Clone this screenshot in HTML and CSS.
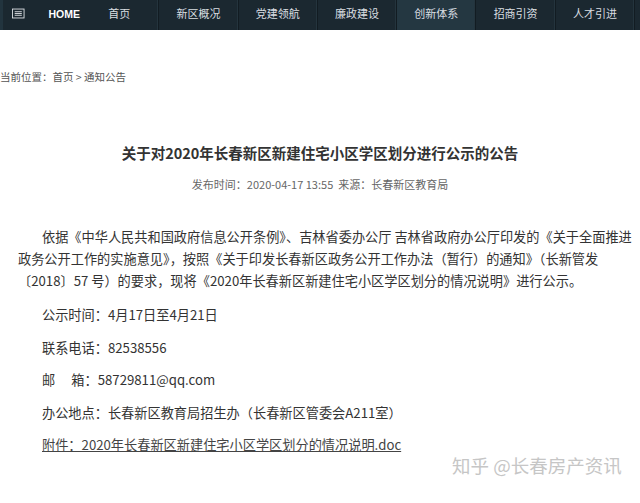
FILE: index.html
```html
<!DOCTYPE html>
<html lang="zh-CN">
<head>
    <meta charset="UTF-8">
    <meta name="viewport" content="width=device-width, initial-scale=1.0">
    <title>关于对2020年长春新区新建住宅小区学区划分进行公示的公告</title>
    <link rel="stylesheet" href="styles.css">
</head>
<body>
    <header class="topbar">
        <div class="brand">
            <svg class="menu-icon" width="14" height="11" viewBox="0 0 14 11">
                <rect x="0.5" y="0.5" width="13" height="10" fill="none" stroke="#dfe3e6" stroke-width="1"/>
                <line x1="3" y1="3.5" x2="11" y2="3.5" stroke="#dfe3e6" stroke-width="1"/>
                <line x1="3" y1="5.5" x2="11" y2="5.5" stroke="#dfe3e6" stroke-width="1"/>
                <line x1="3" y1="7.5" x2="11" y2="7.5" stroke="#dfe3e6" stroke-width="1"/>
            </svg>
            <span class="home">HOME</span>
        </div>
        <nav class="menu">
            <a>首页</a>
            <a>新区概况</a>
            <a>党建领航</a>
            <a>廉政建设</a>
            <a class="active">创新体系</a>
            <a>招商引资</a>
            <a>人才引进</a>
        </nav>
    </header>

    <div class="crumbs">当前位置：首页 &gt; 通知公告</div>

    <h1 class="title">关于对2020年长春新区新建住宅小区学区划分进行公示的公告</h1>
    <div class="meta">发布时间：2020-04-17 13:55&nbsp;&nbsp;来源：长春新区教育局</div>

    <div class="article">
        <p class="lead">依据《中华人民共和国政府信息公开条例》、吉林省委办公厅 吉林省政府办公厅印发的《关于全面推进政务公开工作的实施意见》，按照《关于印发长春新区政务公开工作办法（暂行）的通知》（长新管发〔2018〕57 号）的要求，现将《2020年长春新区新建住宅小区学区划分的情况说明》进行公示。</p>
        <p>公示时间：4月17日至4月21日</p>
        <p>联系电话：82538556</p>
        <p>邮&emsp;&nbsp;箱：58729811@qq.com</p>
        <p>办公地点：长春新区教育局招生办（长春新区管委会A211室）</p>
        <p><a class="file">附件：2020年长春新区新建住宅小区学区划分的情况说明.doc</a></p>
    </div>

    <div class="watermark">知乎 @长春房产资讯</div>
</body>
</html>
```

FILE: styles.css
```css
body, html {
    margin: 0;
    padding: 0;
    background-color: #fff;
    font-family: "Noto Sans CJK SC", "Noto Sans", sans-serif;
    color: #333;
}

body {
    position: relative;
    height: 503px;
    overflow: hidden;
}

.topbar {
    display: flex;
    height: 30px;
    background-color: #1b2830;
    border-left: 3px solid #22343e;
}

.brand {
    display: flex;
    align-items: center;
    width: 77px;
    height: 27px;
}

.menu-icon {
    margin-left: 9px;
}

.home {
    margin-left: 24px;
    font-family: "Liberation Sans", sans-serif;
    font-weight: bold;
    font-size: 10.5px;
    color: #fff;
}

.menu {
    display: flex;
}

.menu a {
    width: 78.3px;
    border-right: 1px solid #121c22;
    box-shadow: inset -1px 0 0 #24343d;
    text-align: center;
    font-size: 11px;
    line-height: 27px;
    color: #d9dee1;
}

.menu a.active {
    background-color: #243741;
}

.crumbs {
    margin-top: 39px;
    font-size: 10.5px;
    line-height: 16px;
    color: #555;
}

.title {
    margin: 58px 0 0;
    text-align: center;
    font-size: 14.5px;
    line-height: 20px;
    font-weight: bold;
    color: #333;
}

.meta {
    margin-top: 13px;
    text-align: center;
    font-size: 11px;
    line-height: 16px;
    color: #666;
}

.article {
    margin-top: 34px;
    padding: 0 8px 0 18px;
    font-size: 13.2px;
    color: #333;
}

.article p {
    margin: 0;
    text-indent: 24px;
    line-height: 32.5px;
}

.article p.lead {
    line-height: 22px;
    margin-bottom: 7px;
}

.file {
    color: #444;
    text-decoration: underline;
}

.watermark {
    position: absolute;
    left: 452px;
    top: 453px;
    font-size: 18.5px;
    line-height: 24px;
    color: #c6c6c6;
}
```
